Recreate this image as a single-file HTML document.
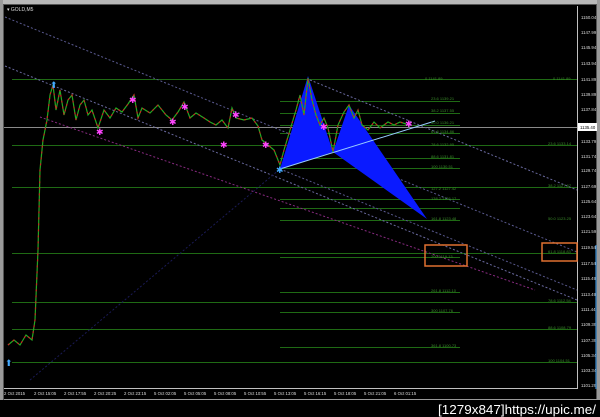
<!DOCTYPE html><html><head><style>
html,body{margin:0;padding:0;background:#000;width:600px;height:417px;overflow:hidden;font-family:"Liberation Sans",sans-serif}
</style></head><body>
<svg width="600" height="417" xmlns="http://www.w3.org/2000/svg" style="display:block">
<rect width="600" height="417" fill="#000"/>
<rect x="0" y="0" width="600" height="4" fill="#b8b8b8"/>
<rect x="0" y="0" width="3" height="400" fill="#9a9a9a"/>
<rect x="597" y="0" width="3" height="400" fill="#9a9a9a"/>
<rect x="3.5" y="4.5" width="593" height="395" fill="none" stroke="#555"/>
<line x1="4" y1="399.5" x2="597" y2="399.5" stroke="#9a9a9a"/>
<line x1="577.5" y1="6" x2="577.5" y2="389" stroke="#c0c0c0"/>
<line x1="4" y1="388.5" x2="578" y2="388.5" stroke="#c0c0c0"/>
<text x="7" y="11" fill="#ddd" font-size="5">▾ GOLD,M5</text>
<g stroke="#1f6a14" stroke-width="1">
<line x1="12" y1="79.5" x2="577" y2="79.5"/>
<line x1="12" y1="145.5" x2="577" y2="145.5"/>
<line x1="12" y1="187.5" x2="577" y2="187.5"/>
<line x1="12" y1="253.5" x2="577" y2="253.5"/>
<line x1="12" y1="302.5" x2="577" y2="302.5"/>
<line x1="12" y1="329.5" x2="577" y2="329.5"/>
<line x1="12" y1="362.5" x2="577" y2="362.5"/>
<line x1="280" y1="101.5" x2="460" y2="101.5"/>
<line x1="280" y1="113.5" x2="460" y2="113.5"/>
<line x1="280" y1="125.5" x2="460" y2="125.5"/>
<line x1="280" y1="133.5" x2="460" y2="133.5"/>
<line x1="280" y1="158.5" x2="460" y2="158.5"/>
<line x1="280" y1="168.5" x2="460" y2="168.5"/>
<line x1="280" y1="199.5" x2="460" y2="199.5"/>
<line x1="280" y1="208.5" x2="460" y2="208.5"/>
<line x1="280" y1="220.5" x2="460" y2="220.5"/>
<line x1="280" y1="257.5" x2="460" y2="257.5"/>
<line x1="280" y1="292.5" x2="460" y2="292.5"/>
<line x1="280" y1="312.5" x2="460" y2="312.5"/>
<line x1="280" y1="347.5" x2="460" y2="347.5"/>
</g>
<line x1="4" y1="127.5" x2="577" y2="127.5" stroke="#8a8a8a"/>
<g stroke-dasharray="2,2" stroke-width="1" fill="none">
<line x1="5" y1="17" x2="577" y2="252" stroke="#5a5a90"/>
<line x1="5" y1="66" x2="577" y2="300" stroke="#6a6aa0"/>
<line x1="310" y1="80" x2="577" y2="190" stroke="#6a6aa0"/>
<line x1="280" y1="169" x2="577" y2="290" stroke="#5a5a90"/>
<line x1="40" y1="117" x2="535" y2="290" stroke="#882a80"/>
<line x1="30" y1="380" x2="280" y2="169" stroke="#1a1a55"/>
</g>
<polygon points="280,169 308,76 333,152" fill="#0a1aff"/>
<polygon points="333,152 349,105 427,219" fill="#0a1aff"/>
<polyline points="280,169 435,121" stroke="#9cf" fill="none"/>
<g fill="none" stroke-width="1.2">
<polyline id="p" stroke="#2a2"
points="8,345 14,340 20,345 26,335 32,340 35,320 38,250 40,170 43,140 47,120 50,95 53,85 56,110 60,90 64,115 68,100 72,95 76,120 80,105 84,100 88,115 92,110 98,128 104,110 110,118 116,108 122,112 128,104 134,95 138,118 142,108 150,113 158,105 166,115 172,120 178,112 184,102 190,118 196,113 204,118 210,122 216,125 222,120 228,128 232,108 236,118 244,120 252,118 258,126 262,140 268,145 274,150 280,165 284,150 290,130 296,110 300,95 304,115 308,78 312,100 316,115 320,125 324,118 328,128 333,152 338,125 344,112 349,105 354,118 358,110 362,125 368,130 374,122 380,128 388,122 394,125 400,122 406,124"/>
<polyline stroke="#c22" stroke-dasharray="2,4"
points="8,345 14,340 20,345 26,335 32,340 35,320 38,250 40,170 43,140 47,120 50,95 53,85 56,110 60,90 64,115 68,100 72,95 76,120 80,105 84,100 88,115 92,110 98,128 104,110 110,118 116,108 122,112 128,104 134,95 138,118 142,108 150,113 158,105 166,115 172,120 178,112 184,102 190,118 196,113 204,118 210,122 216,125 222,120 228,128 232,108 236,118 244,120 252,118 258,126 262,140 268,145 274,150 280,165 284,150 290,130 296,110 300,95 304,115 308,78 312,100 316,115 320,125 324,118 328,128 333,152 338,125 344,112 349,105 354,118 358,110 362,125 368,130 374,122 380,128 388,122 394,125 400,122 406,124"/>
</g>
<g fill="#f4f" font-size="9"><text x="96" y="135">✱</text><text x="129" y="103">✱</text><text x="169" y="125">✱</text><text x="181" y="110">✱</text><text x="220" y="148">✱</text><text x="232" y="118">✱</text><text x="262" y="148">✱</text><text x="405" y="127">✱</text><text x="320" y="130">✱</text></g>
<g fill="#4af" font-size="9"><text x="50" y="88">⬆</text><text x="5" y="366">⬆</text><text x="276" y="173">✱</text></g>
<g fill="none" stroke="#e07030" stroke-width="1.5"><rect x="425" y="245" width="42" height="21"/><rect x="542" y="243" width="35" height="18"/></g>
<g fill="#3a8a2a" font-size="4"><text x="425" y="80">0 1141.89</text><text x="553" y="80">0 1141.89</text><text x="431" y="100">23.6 1139.21</text><text x="431" y="112">38.2 1137.55</text><text x="431" y="124">50.0 1136.21</text><text x="431" y="133">61.8 1134.86</text><text x="431" y="146">78.6 1132.95</text><text x="431" y="158">88.6 1131.81</text><text x="431" y="168">100 1130.51</text><text x="431" y="190">127.2 1127.42</text><text x="431" y="200">138.2 1126.17</text><text x="431" y="220">161.8 1123.48</text><text x="431" y="258">200 1119.13</text><text x="431" y="292">261.8 1112.10</text><text x="431" y="312">300 1107.76</text><text x="431" y="347">361.8 1100.73</text><text x="548" y="145">23.6 1133.14</text><text x="548" y="187">38.2 1127.67</text><text x="548" y="220">50.0 1123.25</text><text x="548" y="253">61.8 1118.83</text><text x="548" y="302">78.6 1112.54</text><text x="548" y="329">88.6 1108.79</text><text x="548" y="362">100 1104.51</text></g>
<g fill="#ddd" font-size="4.3">
<text x="581" y="19">1150.04</text><text x="581" y="34">1147.99</text><text x="581" y="49">1145.94</text><text x="581" y="65">1143.94</text><text x="581" y="81">1141.89</text><text x="581" y="96">1139.89</text><text x="581" y="111">1137.84</text><text x="581" y="143">1133.79</text><text x="581" y="158">1131.74</text><text x="581" y="172">1129.74</text><text x="581" y="188">1127.69</text><text x="581" y="203">1125.64</text><text x="581" y="218">1123.64</text><text x="581" y="233">1121.59</text><text x="581" y="249">1119.54</text><text x="581" y="265">1117.54</text><text x="581" y="280">1115.49</text><text x="581" y="296">1113.49</text><text x="581" y="311">1111.44</text><text x="581" y="326">1109.39</text><text x="581" y="342">1107.39</text><text x="581" y="357">1105.34</text><text x="581" y="372">1103.34</text><text x="581" y="387">1101.29</text>
</g>
<rect x="578" y="123" width="19" height="8" fill="#fff"/><text x="580" y="129" fill="#000" font-size="4.3">1135.40</text>
<line x1="596" y1="245" x2="596" y2="389" stroke="#4af"/>
<g fill="#ddd" font-size="4.3"><text x="4" y="395">2 Oct 2015</text><text x="34" y="395">2 Oct 15:05</text><text x="64" y="395">2 Oct 17:55</text><text x="94" y="395">2 Oct 20:25</text><text x="124" y="395">2 Oct 23:15</text><text x="154" y="395">5 Oct 02:05</text><text x="184" y="395">5 Oct 05:05</text><text x="214" y="395">5 Oct 08:05</text><text x="244" y="395">5 Oct 10:55</text><text x="274" y="395">5 Oct 13:05</text><text x="304" y="395">5 Oct 16:15</text><text x="334" y="395">5 Oct 18:05</text><text x="364" y="395">5 Oct 21:05</text><text x="394" y="395">6 Oct 01:15</text></g>
<text x="438" y="414" fill="#fff" font-size="13" font-family="Liberation Sans Narrow,Liberation Sans,sans-serif" textLength="158" lengthAdjust="spacingAndGlyphs">[1279x847]https://upic.me/</text>
</svg>
</body></html>
